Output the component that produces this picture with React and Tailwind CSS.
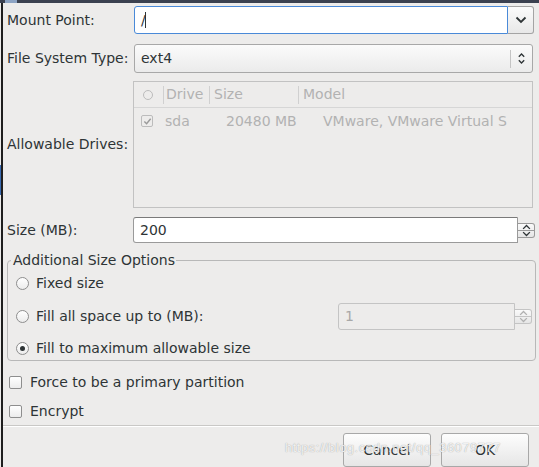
import React from "react";

// Small glyphs drawn as svg
const ChevronDown = ({ className = "" }) => (
    <svg viewBox="0 0 12 8" className={className} fill="none" stroke="currentColor" strokeWidth="1.8">
        <path d="M1.5 1.5 L6 6 L10.5 1.5" />
    </svg>
);

const ChevronUp = ({ className = "" }) => (
    <svg viewBox="0 0 12 8" className={className} fill="none" stroke="currentColor" strokeWidth="1.8">
        <path d="M1.5 6.5 L6 2 L10.5 6.5" />
    </svg>
);

const UpDown = () => (
    <svg viewBox="0 0 10 14" className="w-[9px] h-[13px] text-[#2e3436]" fill="none" stroke="currentColor" strokeWidth="1.5">
        <path d="M2 5 L5 2 L8 5" />
        <path d="M2 9 L5 12 L8 9" />
    </svg>
);

const Radio = ({ checked }) => (
    <span className="w-[13px] h-[13px] rounded-full border border-[#8e8e8e] bg-gradient-to-b from-white to-[#ececec] flex items-center justify-center shrink-0">
        {checked && <span className="w-[5px] h-[5px] rounded-full bg-[#2e3436]" />}
    </span>
);

const Check = () => (
    <span className="w-[13px] h-[13px] rounded-[2px] border border-[#8e8e8e] bg-gradient-to-b from-white to-[#ececec] shrink-0" />
);

const SpinButtons = ({ disabled }) => (
    <div className={`w-[17px] flex flex-col border border-l-0 rounded-r-[3px] ${disabled ? "border-[#c4c4c4] text-[#b0b0b0]" : "border-[#9a9a9a] text-[#2e3436]"} bg-gradient-to-b from-[#fafafa] to-[#e6e6e6]`}>
        <div className={`flex-1 flex items-center justify-center border-b ${disabled ? "border-[#c4c4c4]" : "border-[#9a9a9a]"}`}>
            <ChevronUp className="w-[9px] h-[6px]" />
        </div>
        <div className="flex-1 flex items-center justify-center">
            <ChevronDown className="w-[9px] h-[6px]" />
        </div>
    </div>
);

const App = () => {
    return (
        <div className="w-[539px] h-[467px] bg-[#edeceb] relative overflow-hidden text-[14px] text-[#2e3436] font-['DejaVu_Sans',sans-serif]">
            {/* window title strip */}
            <div className="h-[3px] bg-[#3b4150] relative">
                <div className="absolute left-[5px] top-0 w-[12px] h-[3px] bg-[#8da4c4]" />
            </div>

            <div className="absolute left-0 top-[165px] w-[1px] h-[30px] bg-[#3a6ab0]" />

            <div className="h-[464px] ml-[1px] border-l-2 border-[#1e1e1e] flex flex-col">
                {/* Mount point */}
                <div className="flex items-center mt-[3px] h-[28px]">
                    <span className="w-[131px] pl-[4px]">Mount Point:</span>
                    <div className="w-[374px] h-[28px] bg-white border border-[#4a8ad8] rounded-l-[3px] flex items-center pl-[6px]">
                        <span>/</span>
                        <span className="w-[1px] h-[16px] bg-[#2e3436] -ml-[1px]" />
                    </div>
                    <div className="w-[26px] h-[28px] border border-l-0 border-[#a4a4a4] rounded-r-[3px] bg-gradient-to-b from-[#fbfbfb] to-[#e8e8e8] flex items-center justify-center">
                        <ChevronDown className="w-[12px] h-[8px] text-[#2e3436]" />
                    </div>
                </div>

                {/* File system type */}
                <div className="flex items-center mt-[10px] h-[29px]">
                    <span className="w-[131px] pl-[4px]">File System Type:</span>
                    <div className="w-[399px] h-[29px] border border-[#a8a8a8] rounded-[3px] bg-gradient-to-b from-[#fbfbfb] to-[#ebebeb] flex items-center">
                        <span className="flex-1 pl-[6px]">ext4</span>
                        <span className="w-[1px] h-[18px] bg-[#c4c4c4]" />
                        <span className="w-[21px] flex justify-center">
                            <UpDown />
                        </span>
                    </div>
                </div>

                {/* Allowable drives */}
                <div className="flex items-center mt-[8px] h-[127px]">
                    <span className="w-[130px] pl-[4px]">Allowable Drives:</span>
                    <div className="w-[400px] h-[127px] border border-[#c2c2c2] text-[#b2b2b2] overflow-hidden">
                        <div className="h-[26px] flex items-center border-b border-[#d6d6d6]">
                            <span className="w-[29px] flex items-center pl-[9px]">
                                <span className="w-[10px] h-[10px] rounded-full border border-[#bcbcbc]" />
                            </span>
                            <span className="w-[1px] h-[18px] bg-[#d0d0d0]" />
                            <span className="w-[45px] pl-[2px]">Drive</span>
                            <span className="w-[1px] h-[18px] bg-[#d0d0d0]" />
                            <span className="w-[88px] pl-[4px]">Size</span>
                            <span className="w-[1px] h-[18px] bg-[#d0d0d0]" />
                            <span className="pl-[4px]">Model</span>
                        </div>
                        <div className="h-[26px] flex items-center whitespace-nowrap">
                            <span className="w-[31px] pl-[7px] flex">
                                <span className="w-[12px] h-[12px] border border-[#bcbcbc] rounded-[2px] flex items-center justify-center">
                                    <svg viewBox="0 0 10 10" className="w-[9px] h-[9px]" fill="none" stroke="#9a9a9a" strokeWidth="1.6">
                                        <path d="M1.5 5 L4 7.5 L8.5 2" />
                                    </svg>
                                </span>
                            </span>
                            <span className="w-[61px]">sda</span>
                            <span className="w-[97px]">20480 MB</span>
                            <span>VMware, VMware Virtual S</span>
                        </div>
                    </div>
                </div>

                {/* Size */}
                <div className="flex items-center mt-[9px] h-[26px]">
                    <span className="w-[130px] pl-[4px]">Size (MB):</span>
                    <div className="w-[385px] h-[26px] bg-white border border-[#9a9a9a] border-t-[#7a7a7a] rounded-l-[3px] flex items-center pl-[6px]">
                        200
                    </div>
                    <SpinButtons />
                </div>

                {/* Additional size options */}
                <div className="relative mt-[17px] ml-[4px] w-[529px] h-[103px] border border-[#b8b8b8] rounded-[4px] flex flex-col pt-[12px] pl-[8px]">
                    <span className="absolute -top-[10px] left-[3px] bg-[#edeceb] pl-[2px] pr-[1px] leading-[18px]">
                        Additional Size Options
                    </span>
                    <div className="flex items-center gap-[7px] h-[20px]">
                        <Radio />
                        <span>Fixed size</span>
                    </div>
                    <div className="flex items-center mt-[10px] h-[27px]">
                        <div className="flex items-center gap-[7px] w-[322px]">
                            <Radio />
                            <span>Fill all space up to (MB):</span>
                        </div>
                        <div className="w-[177px] h-[27px] border border-[#c4c4c4] rounded-l-[3px] flex items-center pl-[6px] text-[#a8a8a8]">
                            1
                        </div>
                        <SpinButtons disabled />
                    </div>
                    <div className="flex items-center gap-[7px] mt-[8px] h-[20px]">
                        <Radio checked />
                        <span>Fill to maximum allowable size</span>
                    </div>
                </div>

                {/* Checkboxes */}
                <div className="flex items-center gap-[8px] mt-[12px] ml-[6px] h-[18px]">
                    <Check />
                    <span>Force to be a primary partition</span>
                </div>
                <div className="flex items-center gap-[8px] mt-[11px] ml-[6px] h-[18px]">
                    <Check />
                    <span>Encrypt</span>
                </div>

                <div className="mt-[5px] h-[2px] border-t border-[#c9c8c6] border-b border-b-white" />

                {/* Buttons */}
                <div className="flex justify-end gap-[10px] mt-[6px] pr-[10px]">
                    <button className="w-[88px] h-[34px] border border-[#a8a8a8] rounded-[3px] bg-gradient-to-b from-[#fdfdfd] to-[#e6e6e6] text-[#2e3436]">
                        Cancel
                    </button>
                    <button className="w-[88px] h-[34px] border border-[#a8a8a8] rounded-[3px] bg-gradient-to-b from-[#fdfdfd] to-[#e6e6e6] text-[#2e3436]">
                        OK
                    </button>
                </div>
            </div>

            {/* watermark */}
            <div className="absolute left-[285px] top-[438px] text-[13px] font-['Liberation_Sans',sans-serif] text-white/85 [text-shadow:0_0_1px_#8a8a8a] tracking-[0.5px] pointer-events-none">
                https://blog.csdn.net/qq_36079777
            </div>
        </div>
    );
};

export default App;
